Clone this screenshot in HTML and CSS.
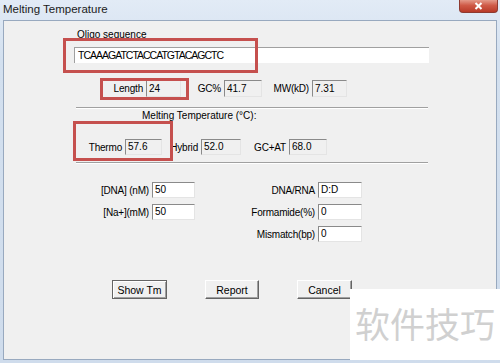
FILE: index.html
```html
<!DOCTYPE html>
<html lang="en">
<head>
    <meta charset="UTF-8">
    <meta name="viewport" content="width=device-width, initial-scale=1.0">
    <title>Melting Temperature</title>
    <link rel="stylesheet" href="styles.css">
</head>
<body>
    <div class="window">
        <div class="titlebar">
            <span class="title">Melting Temperature</span>
            <button class="close" aria-label="Close">
                <svg width="9" height="8" viewBox="0 0 9 8">
                    <path d="M1.5 1 L7.5 7 M7.5 1 L1.5 7" stroke="#fff" stroke-width="2" fill="none"/>
                </svg>
            </button>
        </div>

        <div class="client">
            <div class="caption oligo-caption">Oligo sequence</div>
            <div class="seq-box">TCAAAGATCTACCATGTACAGCTC</div>

            <div class="field-row stats">
                <span class="field-label l-length">Length</span><span class="box ro b-length">24</span>
                <span class="field-label l-gc">GC%</span><span class="box ro b-gc">41.7</span>
                <span class="field-label l-mw">MW(kD)</span><span class="box ro b-mw">7.31</span>
            </div>

            <div class="groove"></div>
            <div class="caption tm-caption">Melting Temperature (°C):</div>

            <div class="field-row tm">
                <span class="field-label l-thermo">Thermo</span><span class="box ro b-thermo">57.6</span>
                <span class="field-label l-hybrid">Hybrid</span><span class="box ro b-hybrid">52.0</span>
                <span class="field-label l-gcat">GC+AT</span><span class="box ro b-gcat">68.0</span>
            </div>

            <div class="groove second"></div>

            <div class="params">
                <div class="param-col left">
                    <div class="field"><span class="field-label">[DNA] (nM)</span><span class="box edit">50</span></div>
                    <div class="field"><span class="field-label">[Na+](mM)</span><span class="box edit">50</span></div>
                </div>
                <div class="param-col right">
                    <div class="field"><span class="field-label">DNA/RNA</span><span class="box edit">D:D</span></div>
                    <div class="field"><span class="field-label">Formamide(%)</span><span class="box edit">0</span></div>
                    <div class="field"><span class="field-label">Mismatch(bp)</span><span class="box edit">0</span></div>
                </div>
            </div>

            <div class="buttons">
                <button class="btn default">Show Tm</button>
                <button class="btn report">Report</button>
                <button class="btn">Cancel</button>
            </div>
        </div>

        <!-- annotation boxes drawn over the dialog -->
        <div class="mark mark-seq"></div>
        <div class="mark mark-length"></div>
        <div class="mark mark-thermo"></div>

        <div class="watermark">软件技巧</div>
    </div>
</body>
</html>
```

FILE: styles.css
```css
body {
    margin: 0;
    font-family: "Liberation Sans", Arial, sans-serif;
    font-size: 10px;
    color: #000;
    overflow: hidden;
}

.window {
    position: relative;
    width: 500px;
    height: 363px;
    background: linear-gradient(#e2ebf6, #d3e0ef 60px, #cfdcec);
}

.titlebar {
    height: 20px;
    display: flex;
    justify-content: space-between;
    align-items: flex-start;
}

.title {
    font-size: 11.5px;
    line-height: 18px;
    padding-left: 3px;
    color: #1b1b1b;
}

.close {
    width: 39px;
    height: 13px;
    margin-right: 2px;
    padding: 0;
    border: 1px solid #8e3a30;
    border-top: none;
    border-radius: 0 0 4px 4px;
    background: linear-gradient(#e49a8a, #cf5a47 45%, #b83a28);
    display: flex;
    justify-content: center;
    align-items: center;
}

.client {
    height: 338px;
    margin: 0 3px;
    border: 1px solid #98a9bf;
    background: #f0f0f0;
}

.caption {
    line-height: 12px;
    height: 12px;
    white-space: nowrap;
}

.oligo-caption {
    margin-top: 8px;
    padding-left: 73px;
}

.seq-box {
    margin: 6px 0 0 70px;
    width: 351px;
    height: 15px;
    line-height: 15px;
    padding-left: 3px;
    font-size: 10.5px;
    letter-spacing: -1px;
    background: #fff;
    border-top: 1px solid #a0a0a0;
    border-left: 1px solid #a0a0a0;
}

.field-row {
    display: flex;
    align-items: center;
}

.field-label {
    text-align: right;
    margin-right: 3px;
    letter-spacing: -0.2px;
    white-space: nowrap;
    flex: none;
}

.box {
    box-sizing: border-box;
    flex: none;
    height: 17px;
    line-height: 15px;
    padding-left: 2px;
    border: 1px solid;
    border-color: #8a8a8a #e4e4e4 #e4e4e4 #8a8a8a;
    white-space: nowrap;
}

.box.ro {
    background: #f0f0f0;
}

.box.edit {
    background: #fff;
    height: 16px;
    line-height: 14px;
}

.stats {
    margin-top: 17px;
    padding-left: 100px;
}

.l-length { width: 39px; }
.b-length { width: 35px; }
.l-gc { width: 40px; }
.b-gc { width: 38px; }
.l-mw { width: 47px; }
.b-mw { width: 35px; }

.groove {
    margin: 10px 0 0 72px;
    width: 352px;
    height: 0;
    border-top: 1px solid #a0a0a0;
    border-bottom: 1px solid #fff;
}

.groove.second {
    margin-top: 7px;
}

.tm-caption {
    margin-top: 1px;
    padding-left: 138px;
}

.tm {
    margin-top: 17px;
    padding-left: 78px;
}

.tm .box {
    height: 16px;
    line-height: 14px;
}

.l-thermo { width: 40px; }
.b-thermo { width: 37px; }
.l-hybrid { width: 36px; }
.b-hybrid { width: 40px; }
.l-gcat { width: 45px; }
.b-gcat { width: 38px; }

.params {
    display: flex;
    margin-top: 18px;
    padding-left: 91px;
    gap: 52px;
}

.param-col {
    display: flex;
    flex-direction: column;
    gap: 6px;
}

.field {
    display: flex;
    align-items: center;
}

.param-col.left .field-label { width: 54px; }
.param-col.left .box { width: 43px; }
.param-col.right .field-label { width: 68px; }
.param-col.right .box { width: 44px; }

.buttons {
    display: flex;
    gap: 38px;
    margin-top: 38px;
    padding-left: 108px;
}

.btn {
    box-sizing: border-box;
    width: 55px;
    height: 19px;
    padding: 0;
    font-family: inherit;
    font-size: 10.5px;
    color: #000;
    background: #f0f0f0;
    border: 1px solid;
    border-color: #fff #646464 #646464 #fff;
    box-shadow: inset -1px -1px 0 #a0a0a0;
}

.btn.report {
    width: 54px;
}

.btn.default {
    border: 1px solid #646464;
    box-shadow: inset 1px 1px 0 #fff, inset -1px -1px 0 #a0a0a0;
}

.mark {
    position: absolute;
    box-sizing: border-box;
    border: 3px solid #c5504e;
}

.mark-seq {
    left: 63px;
    top: 38px;
    width: 195px;
    height: 35px;
}

.mark-length {
    left: 100px;
    top: 78px;
    width: 89px;
    height: 22px;
}

.mark-thermo {
    left: 73px;
    top: 121px;
    width: 100px;
    height: 40px;
}

.watermark {
    position: absolute;
    left: 350px;
    top: 289px;
    width: 145px;
    height: 55px;
    padding: 16px 0 0 5px;
    background: #fff;
    font-family: "Noto Sans CJK SC", sans-serif;
    font-size: 35px;
    line-height: 36px;
    color: #d0d0d0;
    white-space: nowrap;
}
```
